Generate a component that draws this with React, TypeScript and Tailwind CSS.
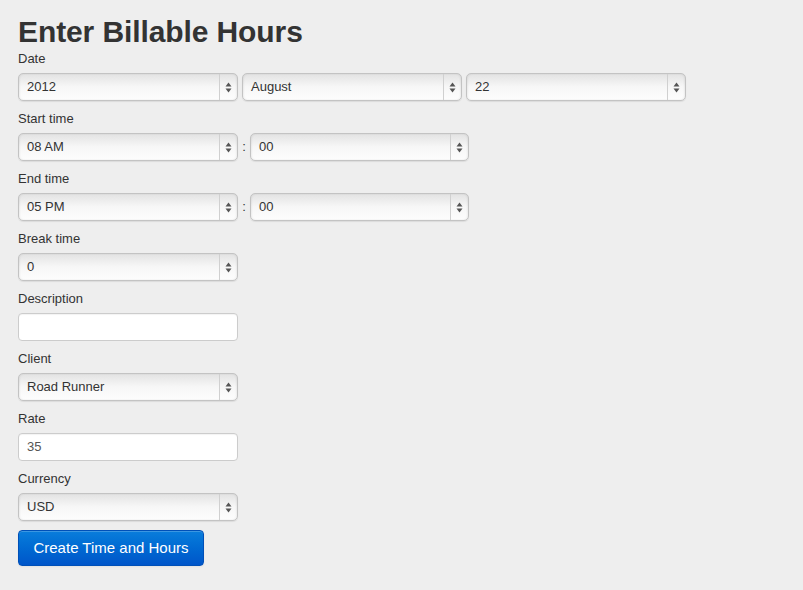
import React from 'react';

function Arrows() {
	return (
		<svg width="7" height="11" viewBox="0 0 7 11" className="block">
			<path d="M3.5 0.5 L6.5 4.5 L0.5 4.5 Z" fill="#555" />
			<path d="M0.5 6.5 L6.5 6.5 L3.5 10.5 Z" fill="#555" />
		</svg>
	);
}

function Select({ value, width = 'w-[220px]' }: { value: string; width?: string }) {
	return (
		<div
			className={`flex h-[28px] ${width} items-stretch rounded-[5px] border border-[#c3c3c3] bg-linear-to-b from-[#e3e3e3] via-[#f7f7f7] to-[#fdfdfd] shadow-[inset_1px_0_2px_rgba(0,0,0,0.06),inset_-1px_0_2px_rgba(0,0,0,0.06),0_1px_1px_rgba(0,0,0,0.08)]`}
		>
			<span className="flex flex-1 items-center pl-[8px] text-[13px] text-[#333]">{value}</span>
			<span className="flex w-[18px] items-center justify-center border-l border-[#d0d0d0]">
				<Arrows />
			</span>
		</div>
	);
}

function Input({ value = '' }: { value?: string }) {
	return (
		<div className="flex h-[28px] w-[220px] items-center rounded-[4px] border border-[#cccccc] bg-white pl-[8px] text-[13px] text-[#555] shadow-[inset_0_1px_1px_rgba(0,0,0,0.05)]">
			{value}
		</div>
	);
}

function Field({ label, children }: { label: string; children: React.ReactNode }) {
	return (
		<div className="pb-[9px]">
			<div className="h-[20px] text-[13px] leading-[18px] text-[#333]">{label}</div>
			<div className="mt-[3px] flex items-center">{children}</div>
		</div>
	);
}

function TimeRow({ hour }: { hour: string }) {
	return (
		<>
			<Select value={hour} />
			<span className="w-[12px] text-center text-[13px] text-[#333]">:</span>
			<Select value="00" width="w-[219px]" />
		</>
	);
}

export default function App() {
	return (
		<div
			className="min-h-[590px] bg-[#eeeeee] pl-[18px] pt-[14px]"
			style={{ fontFamily: '"Liberation Sans", Arial, sans-serif' }}
		>
			<h1 className="text-[30px] font-bold leading-[36px] tracking-[-0.1px] text-[#333]">Enter Billable Hours</h1>
			<Field label="Date">
				<div className="flex gap-[4px]">
					<Select value="2012" />
					<Select value="August" />
					<Select value="22" />
				</div>
			</Field>
			<Field label="Start time">
				<TimeRow hour="08 AM" />
			</Field>
			<Field label="End time">
				<TimeRow hour="05 PM" />
			</Field>
			<Field label="Break time">
				<Select value="0" />
			</Field>
			<Field label="Description">
				<Input />
			</Field>
			<Field label="Client">
				<Select value="Road Runner" />
			</Field>
			<Field label="Rate">
				<Input value="35" />
			</Field>
			<Field label="Currency">
				<Select value="USD" />
			</Field>
			<button className="h-[36px] w-[186px] rounded-[4px] border border-[#0050b8] bg-linear-to-b from-[#0a7ddb] to-[#0055c9] text-[15px] text-white shadow-[inset_0_1px_0_rgba(255,255,255,0.2),0_1px_2px_rgba(0,0,0,0.05)]">
				Create Time and Hours
			</button>
		</div>
	);
}
